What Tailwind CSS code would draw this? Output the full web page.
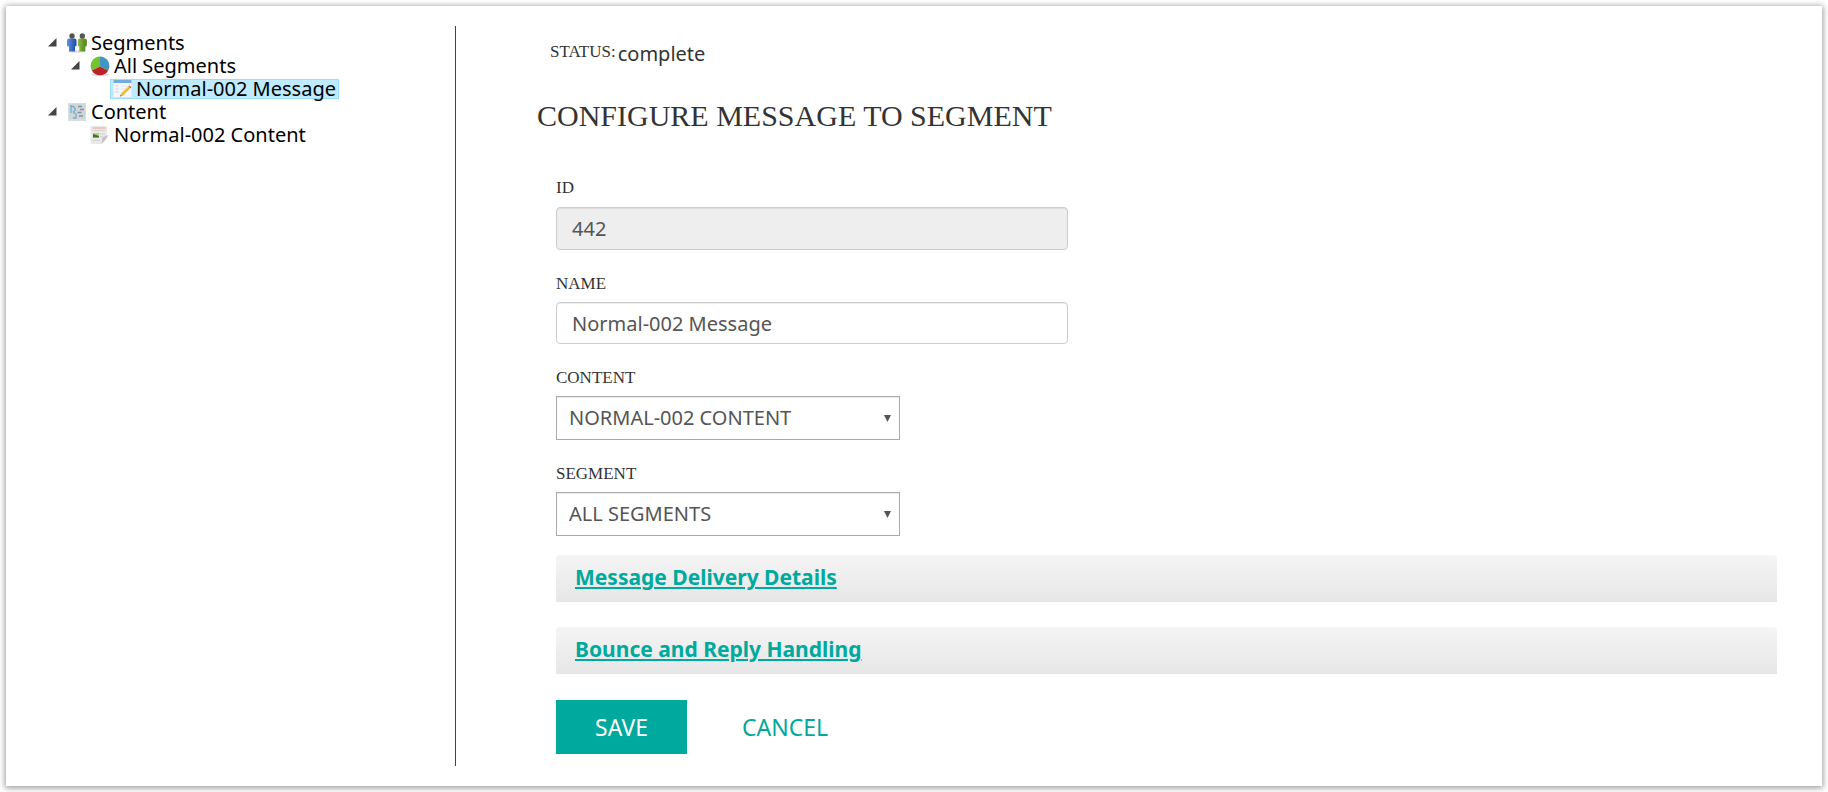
<!DOCTYPE html>
<html lang="en">
<head>
<meta charset="utf-8">
<title>Configure Message to Segment</title>
<script src="https://cdn.jsdelivr.net/npm/@tailwindcss/browser@4"></script>
</head>
<body class="bg-white p-[6px] font-['Noto_Sans',sans-serif] text-[20px] leading-6 text-[#333]">
<div class="flex bg-white py-5 shadow-[0_1px_6px_1px_rgba(0,0,0,0.4)]">
  <aside class="w-[450px] shrink-0 border-r border-[#444] pl-[42px] pt-[5px] text-black">
    <ul class="leading-[23px]">
      <li>
        <div class="flex h-[23px] items-center">
          <svg class="mr-[10px] h-[9px] w-[9px]" viewBox="0 0 9 9"><path d="M8.500 0v8.500H0z" fill="#444"/></svg>
          <svg class="mr-[4px] h-5 w-5" viewBox="0 0 20 20">
            <defs>
              <linearGradient id="blue" x1="0" x2="1"><stop offset="0" stop-color="#5d95e2"/><stop offset="1" stop-color="#1c48a6"/></linearGradient>
              <linearGradient id="green" x1="0" x2="1"><stop offset="0" stop-color="#8cbd42"/><stop offset="1" stop-color="#4c801a"/></linearGradient>
            </defs>
            <ellipse cx="10" cy="18.500" rx="9" ry="1.200" fill="#ddd"/>
            <path d="M0 7.500Q0 5.500 2 5.500h5.500q2 0 2 2v5q0 1-1.500 1v5H2v-5Q0 13.500 0 12.500z" fill="url(#blue)"/>
            <path d="M10.800 7.500q0-2 2-2h5q2 0 2 2v5q0 1-1.500 1v5h-6v-5q-1.500 0-1.500-1z" fill="url(#green)"/>
            <circle cx="5" cy="3" r="2.700" fill="#555"/><circle cx="15.300" cy="3" r="2.700" fill="#555"/>
          </svg>
          <span>Segments</span>
        </div>
        <ul class="pl-[23px]">
          <li>
            <div class="flex h-[23px] items-center">
              <svg class="mr-[10px] h-[9px] w-[9px]" viewBox="0 0 9 9"><path d="M8.500 0v8.500H0z" fill="#444"/></svg>
              <svg class="mr-[4px] h-5 w-5" viewBox="0 0 20 20">
                <ellipse cx="10" cy="18.800" rx="9" ry="1.200" fill="#ddd"/>
                <path d="M10 10.500V.5a9.400 9.400 0 0 1 8.200 14z" fill="#3f95c4"/>
                <path d="M10 10.500V.5a9.400 9.400 0 0 0-8.200 14z" fill="#74c232"/>
                <path d="M10 10.500l8.200 4a9.400 9.400 0 0 1-16.400 0z" fill="#bd2325"/>
              </svg>
              <span>All Segments</span>
            </div>
            <ul class="pl-[39px]">
              <li class="flex h-[23px] items-center">
                <a href="#" aria-current="page" class="flex h-5 items-center border border-[#99defd] bg-[#beebff] px-[2px]">
                  <svg class="mr-[4px] h-[19px] w-[19px]" viewBox="0 0 19 19">
                    <path d="M.5 1h18v17H.5z" fill="#f3f6fb"/><path d="M.5 1h18v3H.5z" fill="#72a9df"/>
                    <path d="M2.500 7h3M2.500 10h3M2.500 13h3" stroke="#ccd5e2"/><path d="M8 7h8M8 10h5" stroke="#e0e5ee"/>
                    <path d="M7 17.500l1.500-3.500 7-6.500 1.900 1.800-7 7z" fill="#f0bd2e"/><path d="M15.500 7.500l1-1 1.900 1.800-1 1z" fill="#df5548"/><path d="M7 17.500l.7-1.700 1 1z" fill="#555"/>
                  </svg>
                  <span>Normal-002 Message</span>
                </a>
              </li>
            </ul>
          </li>
        </ul>
      </li>
      <li>
        <div class="flex h-[23px] items-center">
          <svg class="mr-[4px] h-[9px] w-[9px] mr-[10px]" viewBox="0 0 9 9"><path d="M8.500 0v8.500H0z" fill="#444"/></svg>
          <svg class="mr-[4px] h-5 w-5" viewBox="0 0 20 20">
            <path d="M1 1h18v18H1z" fill="#dcdcdc"/><path d="M2 2h16v15H2z" fill="#cfd6da"/>
            <path d="M4 3v8M4 4.500h2.500l2 3-2.500 3M6 10l3 2v4H6" stroke="#6fb2d3" stroke-width="1.300" fill="none"/>
            <path d="M11 4.500h4M13 7.500h4M10.500 10.500h4M12 14h4" stroke="#87939a" stroke-width="1.400" fill="none"/>
          </svg>
          <span>Content</span>
        </div>
        <ul class="pl-[42px]">
          <li class="flex h-[23px] items-center">
            <svg class="mr-[4px] h-5 w-5" viewBox="0 0 20 20">
              <path d="M.5 1H17v10l-5.500 8H.5z" fill="#e9e9e9"/><path d="M2.500 3h13" stroke="#e5b3a6" stroke-width="1.200"/>
              <path d="M2.500 5.500h13M10 9h5M10 11.500h3M3 15.500h7" stroke="#d3d3d3"/>
              <path d="M3 8h6v4.500H3z" fill="#b3cb8c"/><path d="M3 9l3 1 3 1v1.500H3z" fill="#486c21"/>
              <path d="M18.500 10q-3.500 1-6 2.500l-1 6.500q4-3 7-9z" fill="#c2c2c2"/>
            </svg>
            <span>Normal-002 Content</span>
          </li>
        </ul>
      </li>
    </ul>
  </aside>

  <main class="flex-1 pl-[81px] pr-[45px] pb-3">
    <div class="flex gap-[2px] pl-[13px] pt-4">
      <span class="font-['Liberation_Serif',serif] text-[17px] leading-5">STATUS:</span>
      <span>complete</span>
    </div>
    <h1 class="mt-8 font-['Liberation_Serif',serif] text-[30px] leading-9">CONFIGURE MESSAGE TO SEGMENT</h1>
    <form class="ml-[19px] mt-11">
      <label for="id" class="block font-['Liberation_Serif',serif] text-[17px] leading-5">ID</label>
      <input id="id" value="442" readonly class="mt-[9px] block h-[43px] w-full max-w-[512px] rounded border border-[#ccc] bg-[#eee] px-[15px] text-[#555] shadow-[inset_0_1px_1px_rgba(0,0,0,0.075)]">
      <label for="name" class="mt-6 block font-['Liberation_Serif',serif] text-[17px] leading-5">NAME</label>
      <input id="name" value="Normal-002 Message" class="mt-2 block h-[42px] w-full max-w-[512px] rounded border border-[#ccc] bg-white px-[15px] text-[#555] shadow-[inset_0_1px_1px_rgba(0,0,0,0.075)]">
      <label for="content" class="mt-6 block font-['Liberation_Serif',serif] text-[17px] leading-5">CONTENT</label>
      <div class="relative mt-2 max-w-[344px]">
        <select id="content" class="block h-11 w-full appearance-none border border-[#aaa] bg-white px-3 text-[#555] shadow-[inset_0_1px_1px_rgba(0,0,0,0.075)]"><option>NORMAL-002 CONTENT</option></select>
        <svg class="pointer-events-none absolute right-[9px] top-[19px] h-[7px] w-[7px]" viewBox="0 0 7 7"><path d="M0 0h7L3.500 7z" fill="#555"/></svg>
      </div>
      <label for="segment" class="mt-6 block font-['Liberation_Serif',serif] text-[17px] leading-5">SEGMENT</label>
      <div class="relative mt-2 max-w-[344px]">
        <select id="segment" class="block h-11 w-full appearance-none border border-[#aaa] bg-white px-3 text-[#555] shadow-[inset_0_1px_1px_rgba(0,0,0,0.075)]"><option>ALL SEGMENTS</option></select>
        <svg class="pointer-events-none absolute right-[9px] top-[19px] h-[7px] w-[7px]" viewBox="0 0 7 7"><path d="M0 0h7L3.500 7z" fill="#555"/></svg>
      </div>
      <h2 class="mt-[19px] h-[47px] rounded-t bg-linear-to-b from-[#f5f5f5] to-[#e6e6e6] px-[19px] pt-[10px] text-[21px] font-bold"><a href="#" class="text-[#00a99d] underline decoration-2 underline-offset-2">Message Delivery Details</a></h2>
      <h2 class="mt-[25px] h-[47px] rounded-t bg-linear-to-b from-[#f5f5f5] to-[#e6e6e6] px-[19px] pt-[10px] text-[21px] font-bold"><a href="#" class="text-[#00a99d] underline decoration-2 underline-offset-2">Bounce and Reply Handling</a></h2>
      <div class="mt-[26px] flex h-[54px] text-[23px]">
        <button type="submit" class="w-[131px] bg-[#00a99d] text-white">SAVE</button>
        <button type="button" class="px-[55px] text-[#00a99d]">CANCEL</button>
      </div>
    </form>
  </main>
</div>
</body>
</html>
